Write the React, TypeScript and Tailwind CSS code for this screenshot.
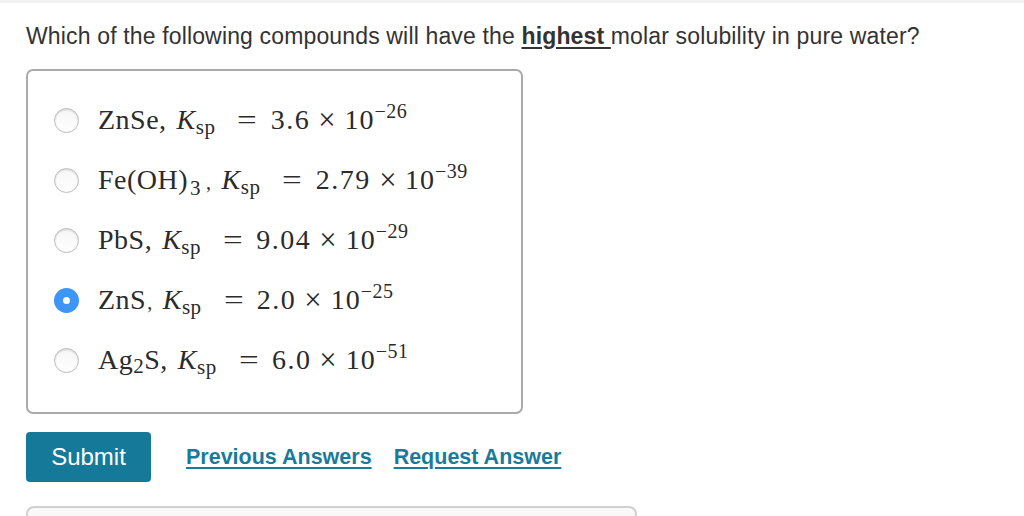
import React from "react";

type Choice = {
  id: string;
  formula: React.ReactNode;
  mant: string;
  exp: string;
  checked?: boolean;
};

const choices: Choice[] = [
  { id: "a", formula: <>ZnSe,</>, mant: "3.6", exp: "26" },
  {
    id: "b",
    formula: (
      <>
        Fe(OH)<sub className="relative top-[6px] ml-[2px] align-baseline text-[21px]">3</sub>
        <span className="ml-[5px] text-[20px]">,</span>
      </>
    ),
    mant: "2.79",
    exp: "39",
  },
  { id: "c", formula: <>PbS,</>, mant: "9.04", exp: "29" },
  {
    id: "d",
    formula: (
      <>
        ZnS<span className="ml-[1px] text-[20px]">,</span>
      </>
    ),
    mant: "2.0",
    exp: "25",
    checked: true,
  },
  {
    id: "e",
    formula: (
      <>
        Ag<sub className="relative top-[4px] align-baseline text-[21px]">2</sub>S,
      </>
    ),
    mant: "6.0",
    exp: "51",
  },
];

function Radio({ checked }: { checked?: boolean }) {
  if (checked) {
    return (
      <span className="flex h-[25px] w-[25px] shrink-0 items-center justify-center rounded-full bg-[#3d95f7]">
        <span className="h-[7px] w-[7px] rounded-full bg-white" />
      </span>
    );
  }
  return (
    <span className="h-[25px] w-[25px] shrink-0 rounded-full border border-[#bdbdbd] bg-gradient-to-b from-[#f6f6f6] to-white shadow-[inset_0_1px_2px_rgba(0,0,0,0.15)]" />
  );
}

function Row({ c }: { c: Choice }) {
  return (
    <label className="flex h-[60px] items-center">
      <Radio checked={c.checked} />
      <span
        className="ml-[19px] whitespace-nowrap text-[28px] leading-none tracking-[0.5px] text-[#2b2b2b]"
        style={{ fontFamily: '"Liberation Serif", "DejaVu Serif", serif' }}
      >
        {c.formula}
        <span className="ml-[10px] italic">K</span>
        <sub className="relative top-[5px] align-baseline text-[21px]">sp</sub>
        <span className="ml-[24px] mr-[15px] inline-block scale-x-125">=</span>
        <span className="tracking-[1.5px]">{c.mant}</span>
        <span className="mx-[9px] inline-block scale-110">×</span>
        <span className="tracking-[1px]">10</span>
        <sup className="relative top-[-11px] align-baseline text-[20px]">−{c.exp}</sup>
      </span>
    </label>
  );
}

export default function App() {
  return (
    <div
      className="h-[516px] w-[1024px] overflow-hidden bg-white text-[#333]"
      style={{ fontFamily: '"Liberation Sans", Arial, sans-serif' }}
    >
      <div className="h-[3px] bg-[#f2f2f2]" />
      <div className="pl-[26px]">
        <p className="mt-[20px] text-[23px] leading-[26px] tracking-[0.15px] text-[#333]">
          Which of the following compounds will have the{" "}
          <strong className="underline underline-offset-[3px]">highest </strong>
          molar solubility in pure water?
        </p>

        <div className="mt-[20px] flex w-[497px] flex-col rounded-[7px] border-2 border-[#aaaaaa] pb-[22px] pl-[26px] pt-[19px]">
          {choices.map((c) => (
            <Row key={c.id} c={c} />
          ))}
        </div>

        <div className="mt-[18px] flex items-center">
          <button className="h-[50px] w-[125px] rounded-[4px] bg-[#157a99] text-[24px] text-white">
            Submit
          </button>
          <a className="ml-[35px] text-[21.5px] font-bold text-[#1a7a9c] underline underline-offset-[3px]">
            Previous Answers
          </a>
          <a className="ml-[22px] text-[21.5px] font-bold text-[#1a7a9c] underline underline-offset-[3px]">
            Request Answer
          </a>
        </div>

        <div className="mt-[24px] h-[40px] w-[611px] rounded-[8px] border-2 border-[#d0d0d0] bg-[#f8f8f8]" />
      </div>
    </div>
  );
}
